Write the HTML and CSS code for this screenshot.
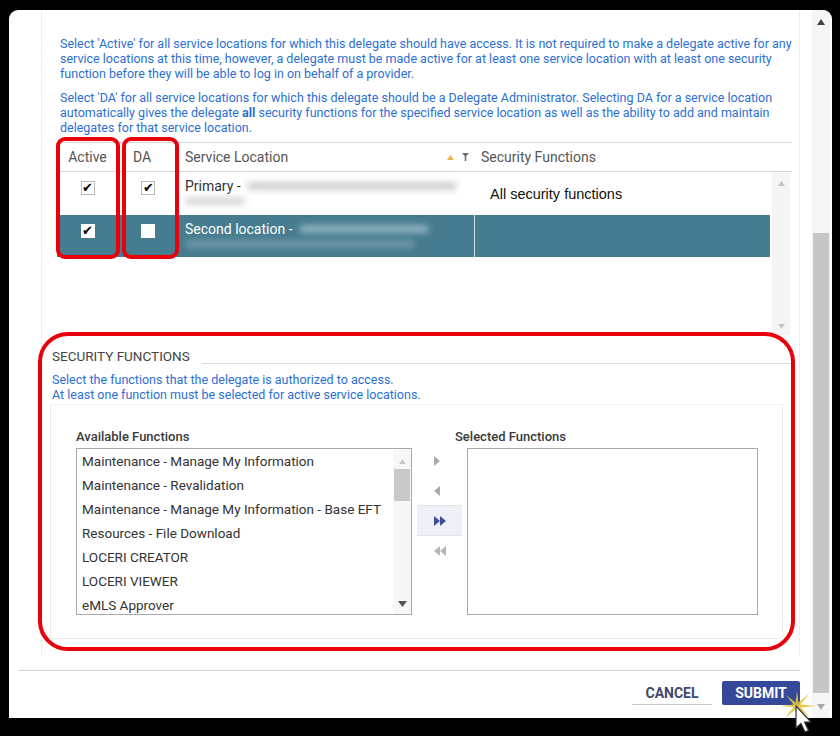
FILE: index.html
```html
<!DOCTYPE html>
<html>
<head>
<meta charset="utf-8">
<link rel="stylesheet" href="styles.css">
</head>
<body>
<div class="screen">
  <div class="window">
    <div class="content">
      <div class="panel">
        <p class="info">Select 'Active' for all service locations for which this delegate should have access. It is not required to make a delegate active for any<br>service locations at this time, however, a delegate must be made active for at least one service location with at least one security<br>function before they will be able to log in on behalf of a provider.</p>
        <p class="info p2">Select 'DA' for all service locations for which this delegate should be a Delegate Administrator. Selecting DA for a service location<br>automatically gives the delegate <b>all</b> security functions for the specified service location as well as the ability to add and maintain<br>delegates for that service location.</p>

        <div class="table">
          <div class="thead">
            <div class="th c-active center">Active</div>
            <div class="th c-da">DA</div>
            <div class="th c-loc">Service Location
              <span class="sort">
                <svg width="7" height="5" viewBox="0 0 7 5"><polygon points="0,5 3.5,0 7,5" fill="#e7b54a"/></svg>
                <svg width="7" height="8" viewBox="0 0 7 8"><polygon points="0,0 7,0 4.3,3 4.3,8 2.7,8 2.7,3" fill="#6d6d6d"/></svg>
              </span>
            </div>
            <div class="th c-sec">Security Functions</div>
          </div>
          <div class="tbody">
            <div class="rows">
              <div class="tr r1">
                <div class="td c-active center"><span class="cb">&#10004;</span></div>
                <div class="td c-da center"><span class="cb">&#10004;</span></div>
                <div class="td c-loc">
                  <div class="loc-line">Primary - <span class="blur b1"></span></div>
                  <div class="loc-line2"><span class="blur b2"></span></div>
                </div>
                <div class="td c-sec all">All security functions</div>
              </div>
              <div class="tr r2">
                <div class="td c-active center"><span class="cb">&#10004;</span></div>
                <div class="td c-da center"><span class="cb empty"></span></div>
                <div class="td c-loc">
                  <div class="loc-line">Second location - <span class="blur b3"></span></div>
                  <div class="loc-line2"><span class="blur b4"></span></div>
                </div>
                <div class="td c-sec sep"></div>
              </div>
            </div>
            <div class="tscroll">
              <svg width="7" height="5" viewBox="0 0 7 5"><polygon points="0,5 3.5,0 7,5" fill="#c4c4c4"/></svg>
              <svg width="7" height="5" viewBox="0 0 7 5"><polygon points="0,0 7,0 3.5,5" fill="#c4c4c4"/></svg>
            </div>
          </div>
        </div>

        <div class="secfn">
          <div class="sec-title"><span>SECURITY FUNCTIONS</span><i class="rule"></i></div>
          <p class="info p3">Select the functions that the delegate is authorized to access.<br>At least one function must be selected for active service locations.</p>
          <div class="picker">
            <div class="col avail">
              <div class="lbl">Available Functions</div>
              <div class="listbox">
                <ul class="items">
                  <li>Maintenance - Manage My Information</li>
                  <li>Maintenance - Revalidation</li>
                  <li>Maintenance - Manage My Information - Base EFT</li>
                  <li>Resources - File Download</li>
                  <li>LOCERI CREATOR</li>
                  <li>LOCERI VIEWER</li>
                  <li>eMLS Approver</li>
                </ul>
                <div class="lscroll">
                  <svg class="up" width="7" height="5" viewBox="0 0 7 5"><polygon points="0,5 3.5,0 7,5" fill="#c8c8c8"/></svg>
                  <div class="thumb"></div>
                  <svg class="down" width="9" height="6" viewBox="0 0 9 6"><polygon points="0,0 9,0 4.5,6" fill="#555"/></svg>
                </div>
              </div>
            </div>
            <div class="movers">
              <div class="mv"><svg width="6" height="10" viewBox="0 0 6 10"><polygon points="0,0 6,5 0,10" fill="#aaa"/></svg></div>
              <div class="mv line"><svg width="6" height="10" viewBox="0 0 6 10"><polygon points="6,0 0,5 6,10" fill="#aaa"/></svg></div>
              <div class="mv active line"><svg width="13" height="10" viewBox="0 0 13 10"><polygon points="0,0 6,5 0,10" fill="#3f4ea0"/><polygon points="6,0 12,5 6,10" fill="#3f4ea0"/></svg></div>
              <div class="mv"><svg width="13" height="10" viewBox="0 0 13 10"><polygon points="6,0 0,5 6,10" fill="#b5b5b5"/><polygon points="12,0 6,5 12,10" fill="#b5b5b5"/></svg></div>
            </div>
            <div class="col selected">
              <div class="lbl">Selected Functions</div>
              <div class="listbox empty"></div>
            </div>
          </div>
        </div>
      </div>
      <div class="footer">
        <button class="btn cancel">CANCEL</button>
        <button class="btn submit">SUBMIT</button>
      </div>
    </div>
    <div class="vscroll">
      <div class="vbtn"><svg width="8" height="6" viewBox="0 0 8 6"><polygon points="0,6 4,0 8,6" fill="#444"/></svg></div>
      <div class="vtrack"><div class="vthumb"></div></div>
      <div class="vbtn"><svg width="8" height="6" viewBox="0 0 8 6"><polygon points="0,0 8,0 4,6" fill="#aaa"/></svg></div>
    </div>
  </div>

  <div class="hl hl-active"></div>
  <div class="hl hl-da"></div>
  <div class="hl hl-sec"></div>

  <svg class="cursor" width="44" height="46" viewBox="0 0 44 46">
    <polygon points="36,15 21,16.5 30,27 19,18 17,31 15.5,18.5 5,27 13.5,16 0,15 13.5,13.5 6,4 15.5,11.5 17,0 18.5,11.5 29,3 20.5,13.5" fill="#e3c23a" opacity="0.9"/>
    <path d="M16 15 L16 37 L21 32.5 L25 41 L28.5 39.5 L24.5 31 L31 31 Z" fill="#fff" stroke="#333" stroke-width="1.2" stroke-linejoin="round"/>
  </svg>
</div>
</body>
</html>
```

FILE: styles.css
```css
* { box-sizing: border-box; }
html, body { margin: 0; padding: 0; }
body {
  background: #000;
  width: 840px;
  height: 736px;
  overflow: hidden;
  font-family: Roboto, "Liberation Sans", sans-serif;
}
.screen {
  position: relative;
  width: 840px;
  height: 736px;
  background: #000;
  padding: 10px 8px 18px 9px;
}
.window {
  display: flex;
  width: 823px;
  height: 708px;
  background: #fff;
  border-radius: 9px 9px 0 0;
  overflow: hidden;
}
.content {
  width: 803px;
  display: flex;
  flex-direction: column;
}
.panel {
  margin-left: 32px;
  width: 759px;
  height: 645px;
  border-left: 1px solid #eee;
  border-right: 1px solid #eee;
  padding: 26px 7px 0 8px;
}
.info {
  margin: 0 0 9px;
  padding-left: 10px;
  color: #2c6fd1;
  font-size: 12.5px;
  line-height: 15px;
  white-space: nowrap;
}
.info b { font-weight: 700; }
.info.p2 { margin-bottom: 7px; }

/* table */
.table { margin-left: 7px; width: 735px; }
.thead {
  display: flex;
  height: 30px;
  border-top: 1px solid #d6d6d6;
  border-bottom: 1px solid #d6d6d6;
}
.th {
  font-size: 14px;
  color: #555;
  line-height: 28px;
}
.c-active { width: 61px; }
.c-da { width: 60px; }
.c-loc { width: 296px; }
.c-sec { flex: 1; }
.center { text-align: center; }
.th.c-da { padding-left: 15px; }
.th.c-loc { padding-left: 7px; display: flex; align-items: center; }
.th.c-sec { padding-left: 7px; }
.sort { margin-left: auto; margin-right: 5px; display: flex; align-items: center; gap: 8px; }

.tbody { display: flex; height: 163px; }
.rows { width: 713px; }
.tr { display: flex; }
.tr.r1 { height: 43px; }
.tr.r2 { height: 42px; background: #467c8f; }
.td { padding-top: 9px; }
.cb {
  display: inline-block;
  width: 14px;
  height: 14px;
  background: #fff;
  border: 1px solid #bbb;
  font-size: 13px;
  line-height: 12px;
  color: #000;
  text-align: center;
  vertical-align: top;
}
.r2 .cb { border-color: #fff; }
.td.c-loc { padding: 6px 0 0 7px; font-size: 14px; line-height: 16px; color: #333; }
.r2 .td.c-loc { color: #fff; }
.loc-line { white-space: nowrap; display: flex; align-items: center; }
.loc-line2 { height: 14px; display: flex; align-items: center; }
.blur {
  display: inline-block;
  height: 8px;
  border-radius: 4px;
  filter: blur(3px);
}
.b1 { width: 210px; margin-left: 6px; background: #cfcfcf; }
.b2 { width: 60px; background: #d8d8d8; }
.b3 { width: 130px; margin-left: 6px; background: #8fb2bf; }
.b4 { width: 230px; background: #6d98a8; }
.td.all {
  padding: 0 0 0 16px;
  display: flex;
  align-items: center;
  font-family: "Liberation Sans", Arial, sans-serif;
  font-size: 14.5px;
  color: #111;
}
.td.sep { border-left: 1px solid #cfe3ea; padding: 0; }
.tscroll {
  width: 18px;
  margin-left: 2px;
  background: #f5f5f5;
  display: flex;
  flex-direction: column;
  justify-content: space-between;
  align-items: center;
  padding: 9px 0 6px;
}

/* security functions */
.secfn { padding-left: 2px; }
.sec-title {
  margin-top: 12px;
  display: flex;
  align-items: flex-end;
  height: 17px;
}
.sec-title span {
  font-size: 13.5px;
  color: #444;
  line-height: 16px;
  white-space: nowrap;
}
.rule {
  flex: 1;
  margin-left: 12px;
  border-bottom: 1px solid #ddd;
  height: 1px;
}
.info.p3 { padding-left: 0; margin: 8px 0 0; }
.picker {
  margin-top: 2px;
  margin-left: -2px;
  width: 733px;
  height: 235px;
  border: 1px solid #ececec;
  border-top-color: #f3f3f3;
  padding: 24px 0 0 25px;
  display: flex;
}
.lbl {
  font-size: 13px;
  font-weight: 500;
  color: #3a3a3a;
  line-height: 16px;
  height: 16px;
  margin-bottom: 3px;
  white-space: nowrap;
}
.avail { width: 336px; }
.listbox {
  height: 167px;
  border: 1px solid #aaa;
  display: flex;
}
.items {
  list-style: none;
  margin: 0;
  padding: 0;
  flex: 1;
}
.items li {
  font-size: 13.5px;
  line-height: 24px;
  height: 24px;
  color: #333;
  padding-left: 5px;
  white-space: nowrap;
}
.lscroll {
  width: 18px;
  background: #f7f7f7;
  display: flex;
  flex-direction: column;
  align-items: center;
  padding-top: 10px;
}
.lscroll .thumb {
  width: 16px;
  height: 32px;
  background: #c9c9c9;
  margin-top: 5px;
}
.lscroll .down { margin-top: auto; margin-bottom: 7px; }

.movers {
  width: 55px;
  padding: 17px 0 0 5px;
}
.mv {
  width: 45px;
  height: 30px;
  display: flex;
  align-items: center;
  justify-content: flex-start;
  padding-left: 17px;
}
.mv.line { border-bottom: 1px solid #e2e2e2; }
.mv.active { background: #eef0f7; height: 30px; }
.selected { width: 291px; }
.selected .lbl { margin-left: -12px; }
.listbox.empty { width: 291px; }

/* footer */
.footer {
  margin: 15px 12px 0 10px;
  border-top: 1px solid #d3d3d3;
  padding-top: 10px;
  display: flex;
  justify-content: flex-end;
}
.btn {
  font-family: Roboto, "Liberation Sans", sans-serif;
  font-size: 14px;
  font-weight: 700;
  height: 24px;
  padding: 0;
  border: none;
  cursor: pointer;
}
.cancel {
  width: 80px;
  margin-right: 10px;
  background: #fff;
  color: #3d4a6e;
  border-bottom: 1px solid #c9ccd4;
}
.submit {
  width: 78px;
  background: #35499a;
  color: #fff;
  border-radius: 2px;
}

/* outer scrollbar */
.vscroll {
  width: 18px;
  display: flex;
  flex-direction: column;
  background: #f6f6f6;
}
.vbtn {
  height: 23px;
  display: flex;
  align-items: center;
  justify-content: center;
}
.vtrack { flex: 1; padding-top: 200px; }
.vthumb { width: 16px; margin-left: 1px; height: 460px; background: #c6c6c6; }

/* red highlights */
.hl {
  position: absolute;
  border: 4px solid #e8000b;
  border-radius: 9px;
}
.hl-active { left: 56px; top: 137px; width: 64px; height: 122px; }
.hl-da { left: 122px; top: 137px; width: 57px; height: 122px; }
.hl-sec { left: 38px; top: 332px; width: 757px; height: 319px; border-radius: 30px; }

.cursor { position: absolute; left: 780px; top: 691px; }
```
